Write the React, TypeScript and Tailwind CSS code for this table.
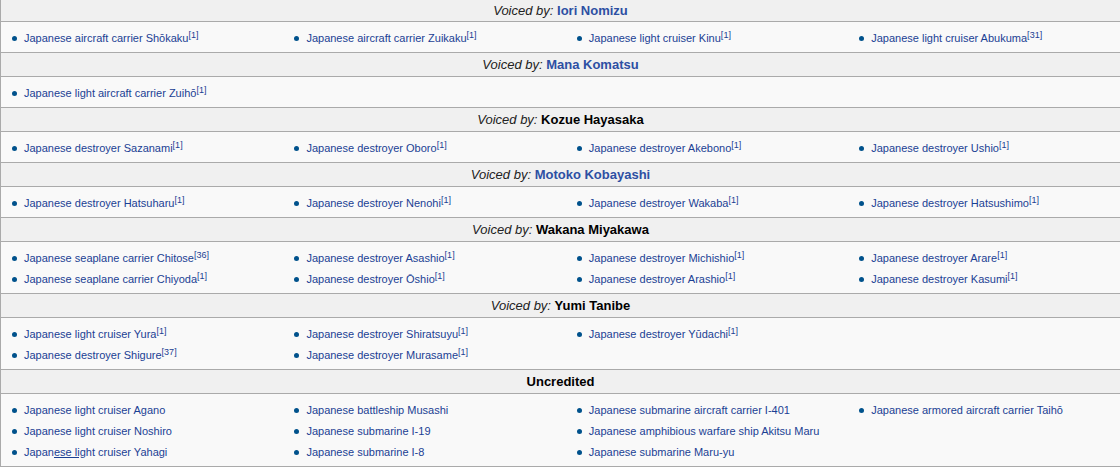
import React from 'react';

type Item = { text: React.ReactNode; ref?: string } | null;

interface Section {
  name: string;
  voiced: boolean;
  link: boolean;
  rows: Item[][];
}

const ja = (t: string, ref?: string): Item => ({ text: `Japanese ${t}`, ref });

const sections: Section[] = [
  {
    name: 'Iori Nomizu',
    voiced: true,
    link: true,
    rows: [[ja('aircraft carrier Shōkaku', '1'), ja('aircraft carrier Zuikaku', '1'), ja('light cruiser Kinu', '1'), ja('light cruiser Abukuma', '31')]],
  },
  {
    name: 'Mana Komatsu',
    voiced: true,
    link: true,
    rows: [[ja('light aircraft carrier Zuihō', '1')]],
  },
  {
    name: 'Kozue Hayasaka',
    voiced: true,
    link: false,
    rows: [[ja('destroyer Sazanami', '1'), ja('destroyer Oboro', '1'), ja('destroyer Akebono', '1'), ja('destroyer Ushio', '1')]],
  },
  {
    name: 'Motoko Kobayashi',
    voiced: true,
    link: true,
    rows: [[ja('destroyer Hatsuharu', '1'), ja('destroyer Nenohi', '1'), ja('destroyer Wakaba', '1'), ja('destroyer Hatsushimo', '1')]],
  },
  {
    name: 'Wakana Miyakawa',
    voiced: true,
    link: false,
    rows: [
      [ja('seaplane carrier Chitose', '36'), ja('destroyer Asashio', '1'), ja('destroyer Michishio', '1'), ja('destroyer Arare', '1')],
      [ja('seaplane carrier Chiyoda', '1'), ja('destroyer Ōshio', '1'), ja('destroyer Arashio', '1'), ja('destroyer Kasumi', '1')],
    ],
  },
  {
    name: 'Yumi Tanibe',
    voiced: true,
    link: false,
    rows: [
      [ja('light cruiser Yura', '1'), ja('destroyer Shiratsuyu', '1'), ja('destroyer Yūdachi', '1'), null],
      [ja('destroyer Shigure', '37'), ja('destroyer Murasame', '1'), null, null],
    ],
  },
  {
    name: 'Uncredited',
    voiced: false,
    link: false,
    rows: [
      [ja('light cruiser Agano'), ja('battleship Musashi'), ja('submarine aircraft carrier I-401'), ja('armored aircraft carrier Taihō')],
      [ja('light cruiser Noshiro'), ja('submarine I-19'), ja('amphibious warfare ship Akitsu Maru'), null],
      [
        {
          text: (
            <>
              Japan<span className="underline">ese lig</span>ht cruiser Yahagi
            </>
          ),
        },
        ja('submarine I-8'),
        ja('submarine Maru-yu'),
        null,
      ],
    ],
  },
];

function Cell({ item }: { item: Item }) {
  if (!item) return <div />;
  return (
    <div className="flex items-center pl-[11px] whitespace-nowrap">
      <span className="w-[5px] h-[5px] rounded-full bg-[#00528c] shrink-0" />
      <span className="ml-[7px] text-[#1b3f94]">
        {item.text}
        {item.ref && <sup className="text-[9px]">[{item.ref}]</sup>}
      </span>
    </div>
  );
}

export default function App() {
  return (
    <div className="w-[1120px] h-[468px] overflow-hidden bg-white font-['Liberation_Sans',Arial,sans-serif]">
      <div className="w-[1131px] border-l border-[#aaa]">
        {sections.map((s, i) => (
          <div key={s.name}>
            {/* Header */}
            <div
              className={`${i === 0 ? 'h-[22px] leading-[21px]' : 'h-[24px] leading-[23px]'} bg-[#f0f0f0] border-b border-[#aaa] text-center text-[13px] text-[#222] pr-[11px]`}
            >
              {s.voiced && <i>Voiced by: </i>}
              <b className={s.link ? 'text-[#2d4fa3]' : 'text-black'}>{s.name}</b>
            </div>

            {/* Content */}
            <div className="bg-[#f9f9f9] border-b border-[#aaa] pt-[6px] pb-[3px] text-[11px]">
              {s.rows.map((row, r) => (
                <div key={r} className="grid grid-cols-[repeat(4,282.4px)] h-[21px] leading-[21px]">
                  {[0, 1, 2, 3].map((c) => (
                    <Cell key={c} item={row[c] ?? null} />
                  ))}
                </div>
              ))}
            </div>
          </div>
        ))}
      </div>
    </div>
  );
}
